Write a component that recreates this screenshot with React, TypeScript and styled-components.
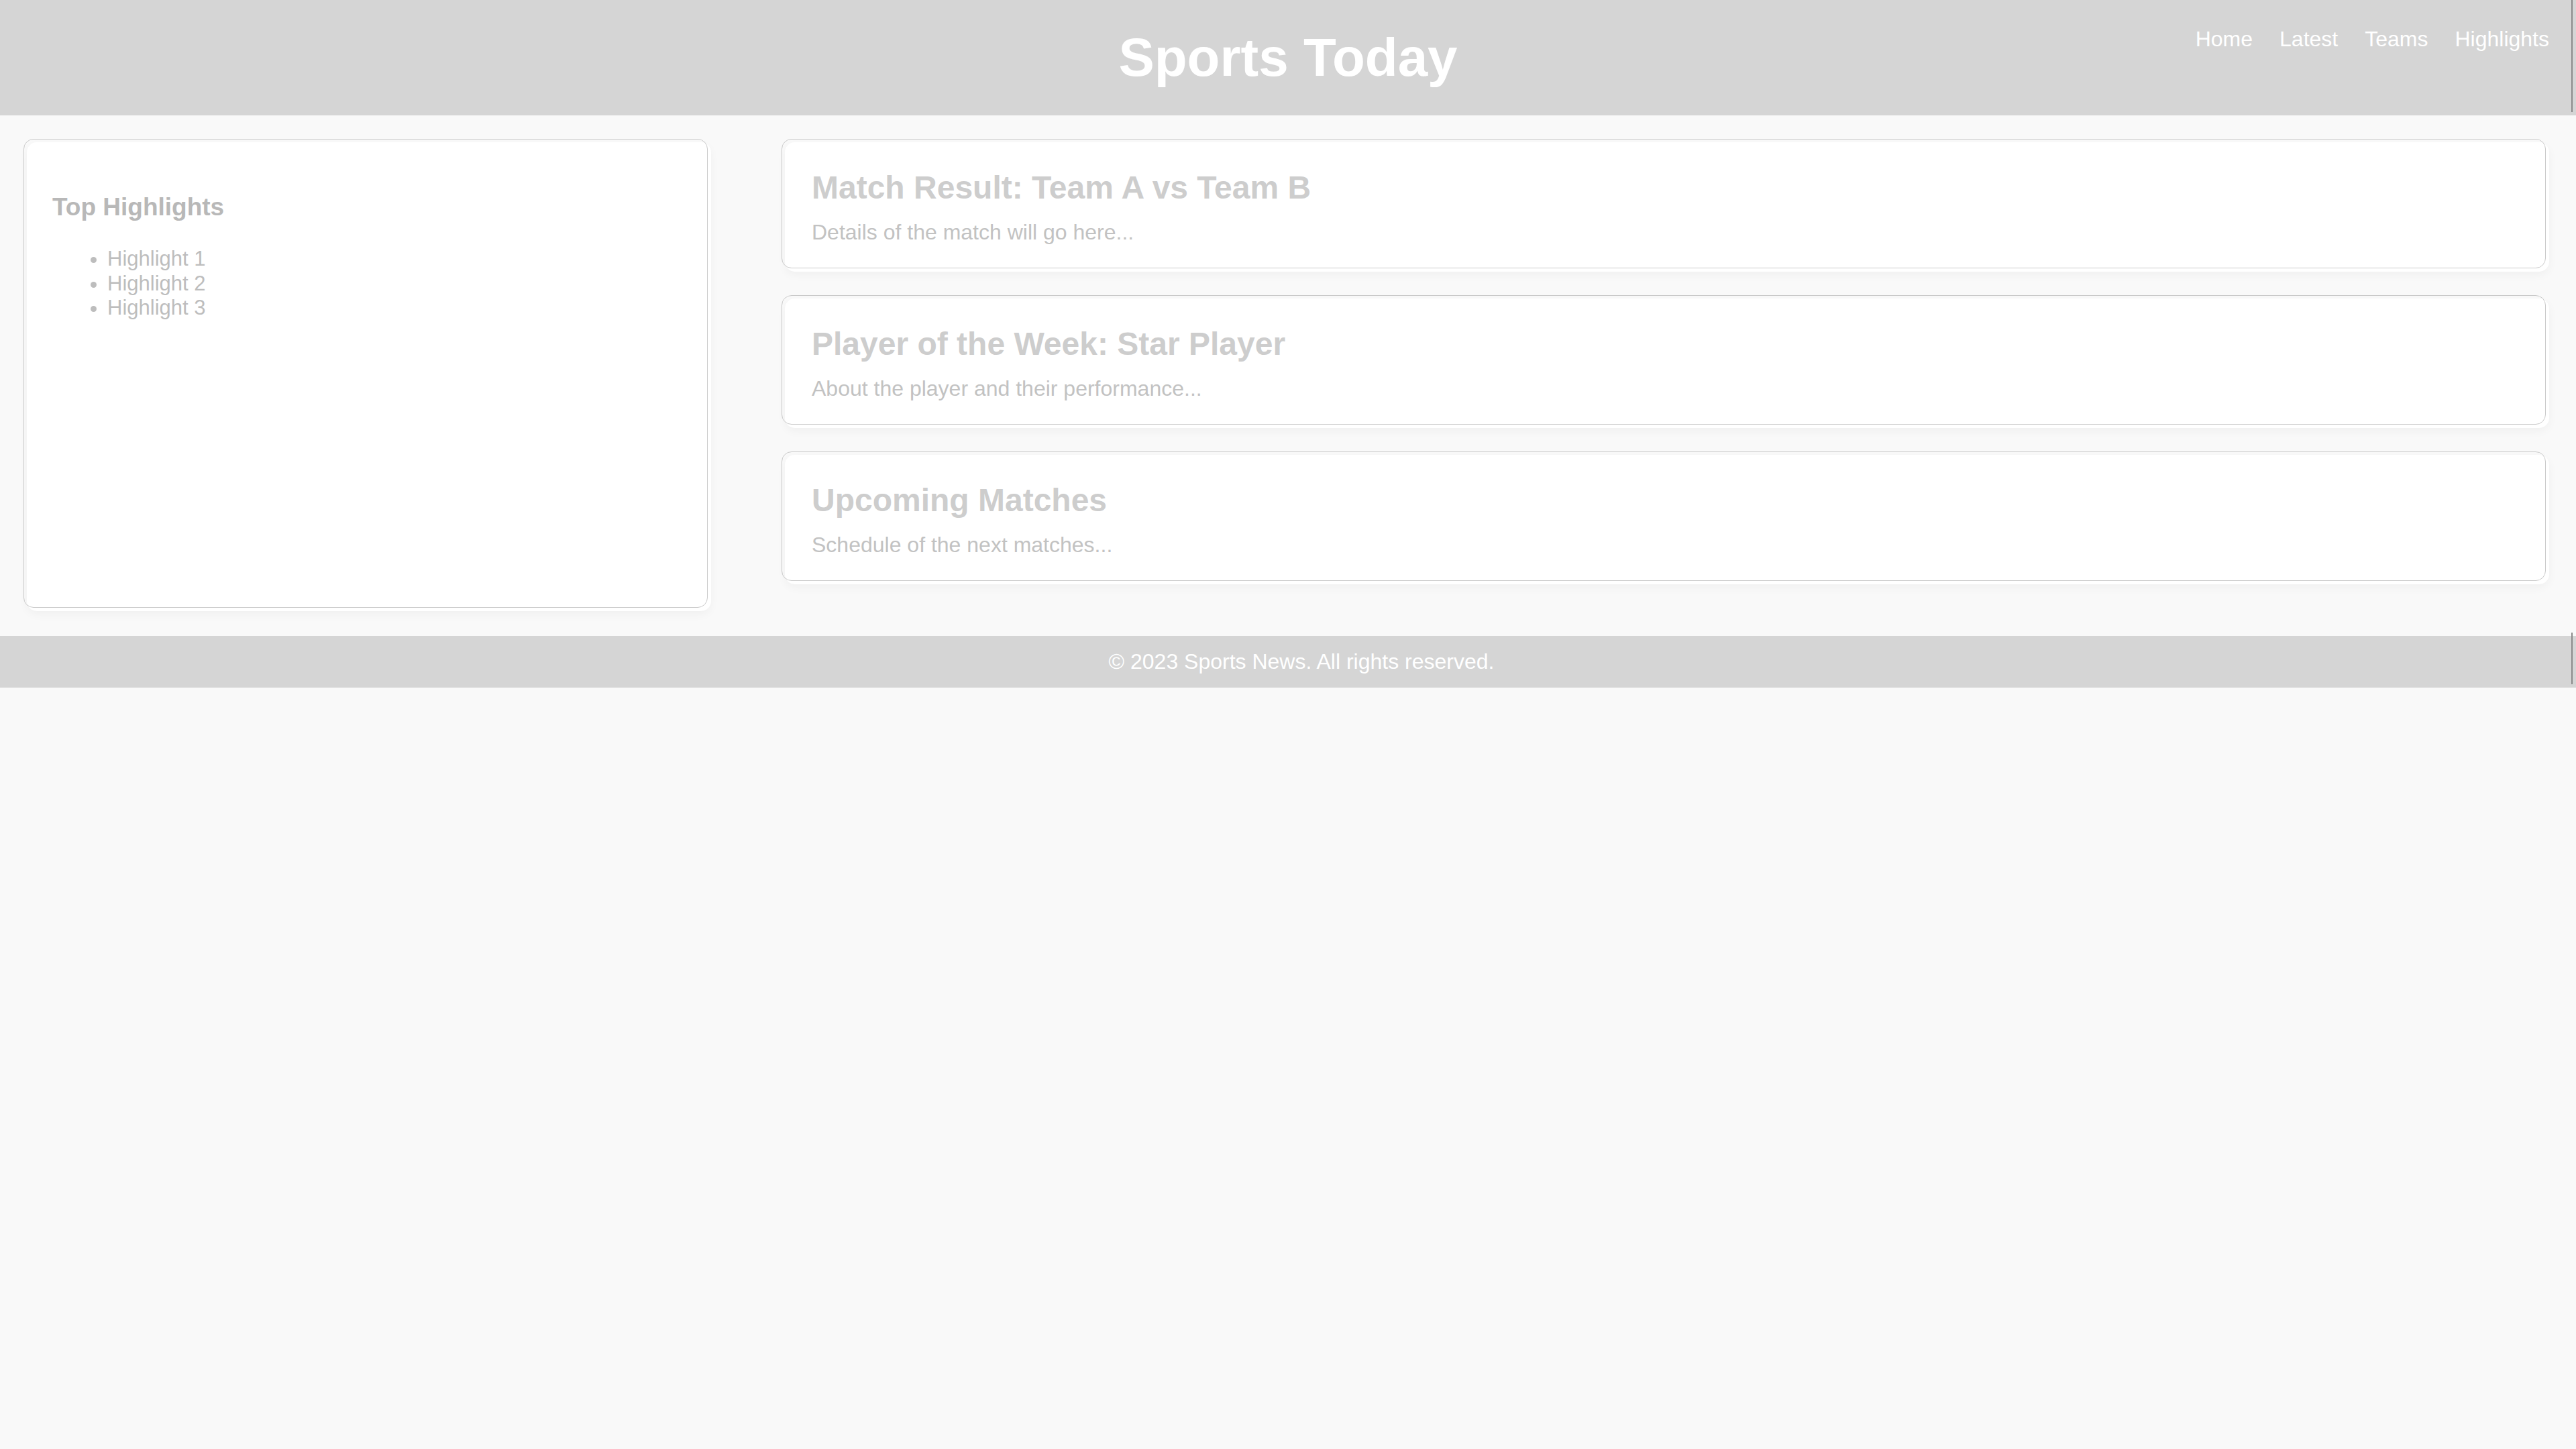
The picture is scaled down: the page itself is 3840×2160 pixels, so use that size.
import React from "react";
import styled, { createGlobalStyle } from "styled-components";

const GlobalStyle = createGlobalStyle`
  html, body {
    margin: 0;
    padding: 0;
    background: #f9f9f9;
    font-family: "Liberation Sans", Arial, sans-serif;
  }
  * { box-sizing: border-box; }
`;

const Header = styled.header`
  position: relative;
  display: grid;
  grid-template-columns: 1fr auto 1fr;
  align-items: start;
  padding: 40px;
  background: #d5d5d5;
  &::after {
    content: "";
    position: absolute;
    right: 5px;
    top: 0;
    width: 2px;
    height: calc(100% - 5px);
    background: #8a8a8a;
  }
`;

const Title = styled.h1`
  grid-column: 2;
  margin: 0;
  font-size: 80px;
  line-height: 92px;
  font-weight: 700;
  color: #ffffff;
`;

const Nav = styled.nav`
  grid-column: 3;
  justify-self: end;
  display: flex;
  gap: 40px;
`;

const NavLink = styled.a`
  font-size: 32px;
  line-height: 37px;
  color: #ffffff;
  text-decoration: none;
`;

const Main = styled.main`
  display: flex;
  align-items: stretch;
  gap: 110px;
  padding: 40px 40px 37px;
`;

const Panel = styled.div`
  position: relative;
  background: #ffffff;
  border-radius: 15px;
  box-shadow: 0 5px 14px rgba(0, 0, 0, 0.04);
  &::before {
    content: "";
    position: absolute;
    top: -5px;
    left: -5px;
    right: 5px;
    bottom: 5px;
    border: 1px solid #cacaca;
    border-radius: 15px;
    pointer-events: none;
  }
`;

const Sidebar = styled(Panel)`
  flex: none;
  width: 1020px;
  padding: 40px 40px 40px 38px;
`;

const SidebarTitle = styled.h2`
  margin: 36px 0 38px;
  font-size: 37px;
  line-height: 42px;
  font-weight: 700;
  color: #b8b8b8;
`;

const List = styled.ul`
  margin: 0;
  padding-left: 82px;
  color: #bdbdbd;
`;

const ListItem = styled.li`
  font-size: 31px;
  line-height: 36.7px;
`;

const Articles = styled.section`
  flex: 1;
  display: flex;
  flex-direction: column;
  gap: 40px;
  padding-bottom: 40px;
`;

const Article = styled(Panel)`
  padding: 40px;
`;

const ArticleTitle = styled.h2`
  margin: 0 0 20px;
  font-size: 48px;
  line-height: 55px;
  font-weight: 700;
  color: #cdcdcd;
`;

const ArticleText = styled.p`
  margin: 0;
  font-size: 32px;
  line-height: 38px;
  color: #c2c2c2;
`;

const Footer = styled.footer`
  position: relative;
  padding: 20px 0 20px 40px;
  background: #d5d5d5;
  text-align: center;
  color: #ffffff;
  font-size: 32px;
  line-height: 37px;
  &::after {
    content: "";
    position: absolute;
    right: 5px;
    top: -5px;
    width: 2px;
    height: 100%;
    background: #8a8a8a;
  }
`;

const articles = [
  { title: "Match Result: Team A vs Team B", text: "Details of the match will go here..." },
  { title: "Player of the Week: Star Player", text: "About the player and their performance..." },
  { title: "Upcoming Matches", text: "Schedule of the next matches..." },
];

export default function App() {
  return (
    <>
      <GlobalStyle />
      <Header>
        <Title>Sports Today</Title>
        <Nav>
          <NavLink href="#">Home</NavLink>
          <NavLink href="#">Latest</NavLink>
          <NavLink href="#">Teams</NavLink>
          <NavLink href="#">Highlights</NavLink>
        </Nav>
      </Header>
      <Main>
        <Sidebar>
          <SidebarTitle>Top Highlights</SidebarTitle>
          <List>
            <ListItem>Highlight 1</ListItem>
            <ListItem>Highlight 2</ListItem>
            <ListItem>Highlight 3</ListItem>
          </List>
        </Sidebar>
        <Articles>
          {articles.map((a) => (
            <Article key={a.title}>
              <ArticleTitle>{a.title}</ArticleTitle>
              <ArticleText>{a.text}</ArticleText>
            </Article>
          ))}
        </Articles>
      </Main>
      <Footer>© 2023 Sports News. All rights reserved.</Footer>
    </>
  );
}
